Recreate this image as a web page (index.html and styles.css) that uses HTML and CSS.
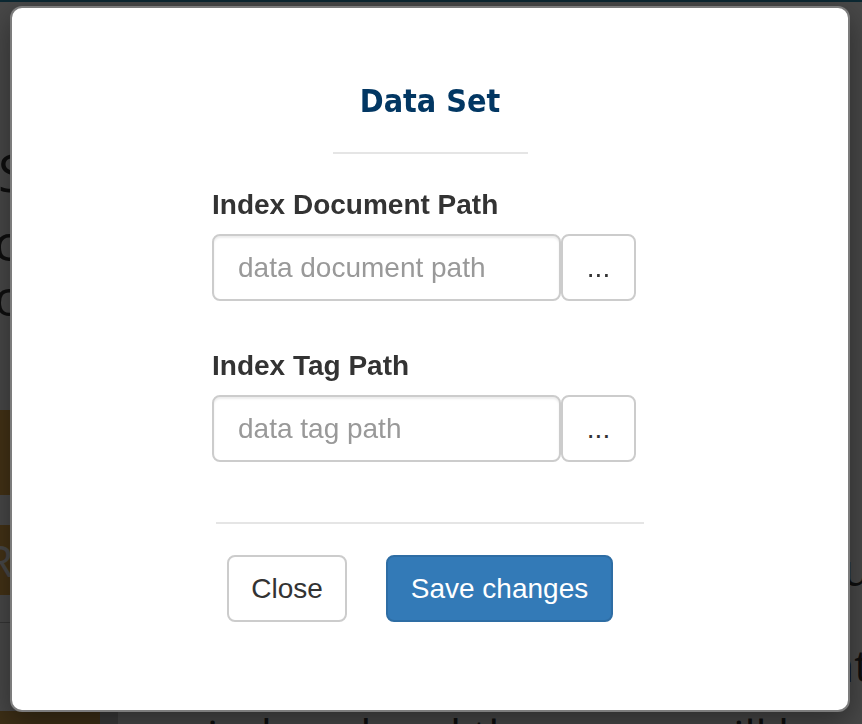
FILE: index.html
```html
<!DOCTYPE html>
<html lang="en">
<head>
<meta charset="utf-8">
<title>Data Set</title>
<link rel="stylesheet" href="styles.css">
</head>
<body>
<div class="page">
  <div class="topbar"></div>
  <div class="layout">
    <aside class="side">
      <h2 class="side-title">Search</h2>
      <p class="side-text">config</p>
      <p class="side-text">or</p>
      <div class="warn-block"></div>
      <div class="warn-btn">Reindex</div>
      <div class="side-rule"></div>
      <div class="warn-bottom"></div>
    </aside>
    <div class="gutter"></div>
    <main class="main">
      <p class="frag frag-u">you</p>
      <p class="frag frag-t">that</p>
      <p class="main-bottom">indexed and the screen will be</p>
    </main>
  </div>
</div>
<div class="backdrop"></div>
<div class="modal">
  <div class="modal-header">
    <h4 class="modal-title">Data Set</h4>
    <div class="head-rule"></div>
  </div>
  <form class="form">
    <div class="form-group">
      <label class="field-label">Index Document Path</label>
      <div class="input-group">
        <input class="form-control" type="text" placeholder="data document path">
        <button class="btn btn-default btn-browse" type="button">...</button>
      </div>
    </div>
    <div class="form-group second">
      <label class="field-label">Index Tag Path</label>
      <div class="input-group">
        <input class="form-control" type="text" placeholder="data tag path">
        <button class="btn btn-default btn-browse" type="button">...</button>
      </div>
    </div>
    <div class="foot-rule"></div>
    <div class="modal-footer">
      <button class="btn btn-default btn-close" type="button">Close</button>
      <button class="btn btn-primary" type="button">Save changes</button>
    </div>
  </form>
</div>
</body>
</html>
```
FILE: styles.css
```css
html, body {
  margin: 0;
  padding: 0;
  height: 724px;
  overflow: hidden;
}
body {
  background: #ffffff;
  font-family: "Liberation Sans", Arial, sans-serif;
  color: #333333;
}
.page {
  height: 724px;
  overflow: hidden;
}
.topbar {
  height: 2px;
  background: #2a8fb4;
}
.layout {
  display: grid;
  grid-template-columns: 100px 18px 1fr;
  height: 722px;
  overflow: hidden;
}
.side {
  font-family: "Open Sans", sans-serif;
  color: #333333;
  min-width: 0;
}
.side-title {
  margin: 140px 0 0 -2px;
  font-size: 52px;
  font-weight: 400;
  line-height: 60px;
}
.side-text {
  margin: 13px 0 0 -6px;
  font-size: 50px;
  line-height: 55px;
  white-space: nowrap;
}
.side-text + .side-text {
  margin-top: 0;
}
.warn-block {
  margin-top: 85px;
  height: 85px;
  background: #eeb04c;
}
.warn-btn {
  margin-top: 30px;
  height: 70px;
  background: #eeb04c;
  color: #ffffff;
  font-size: 44px;
  line-height: 70px;
  margin-left: -20px;
  padding-left: 6px;
  white-space: nowrap;
  overflow: hidden;
}
.side-rule {
  margin-top: 27px;
  height: 1px;
  background: #bbbbbb;
}
.warn-bottom {
  margin-top: 88px;
  height: 20px;
  background: #d8a64e;
}
.gutter {
  background: #cfcfcf;
  margin-top: 710px;
}
.main {
  font-family: "Open Sans", sans-serif;
  color: #333333;
  min-width: 0;
}
.frag {
  margin: 0 -8px 0 0;
  font-size: 44px;
  line-height: 50px;
  text-align: right;
}
.frag-u {
  margin-top: 542px;
}
.frag-t {
  margin-top: 46px;
}
.main-bottom {
  margin: 20px 0 0 89px;
  font-size: 44px;
  line-height: 50px;
  white-space: nowrap;
}

/* overlay */
.backdrop {
  position: fixed;
  inset: 0;
  background: rgba(0, 0, 0, 0.72);
}
.modal {
  position: fixed;
  left: 10px;
  top: 6px;
  width: 840px;
  height: 706px;
  box-sizing: border-box;
  background: #ffffff;
  border: 2px solid #7c7c7c;
  border-radius: 12px;
  box-shadow: 0 10px 30px rgba(0, 0, 0, 0.4);
}
.modal-header {
  padding-top: 73px;
  text-align: center;
}
.modal-title {
  margin: 0;
  font-family: "DejaVu Sans Condensed", "DejaVu Sans", sans-serif;
  font-stretch: condensed;
  font-weight: 700;
  font-size: 32px;
  line-height: 40px;
  color: #023763;
}
.head-rule {
  width: 195px;
  height: 2px;
  margin: 31px auto 0;
  background: #e5e5e5;
}
.form {
  width: 436px;
  margin: 31px auto 0;
}
.form-group.second {
  margin-top: 45px;
}
.field-label {
  display: block;
  font-weight: 700;
  font-size: 28px;
  line-height: 40px;
  color: #333333;
}
.input-group {
  display: flex;
  margin-top: 9px;
  height: 67px;
}
.form-control {
  box-sizing: border-box;
  width: 349px;
  height: 67px;
  margin: 0;
  padding: 0 24px;
  border: 2px solid #cccccc;
  border-radius: 8px;
  box-shadow: inset 0 2px 2px rgba(0, 0, 0, 0.075);
  font-family: "Liberation Sans", Arial, sans-serif;
  font-size: 28px;
  color: #555555;
  background: #ffffff;
  outline: none;
}
.form-control::placeholder {
  color: #999999;
}
.btn {
  box-sizing: border-box;
  height: 67px;
  margin: 0;
  padding: 0 24px;
  border: 2px solid #cccccc;
  border-radius: 8px;
  font-family: "Liberation Sans", Arial, sans-serif;
  font-size: 28px;
  line-height: 40px;
  cursor: pointer;
}
.btn-default {
  background: #ffffff;
  color: #333333;
}
.btn-browse {
  width: 75px;
  padding: 0;
}
.btn-primary {
  background: #337ab7;
  border-color: #2e6da4;
  color: #ffffff;
  width: 227px;
  padding: 0;
}
.btn-close {
  width: 120px;
  padding: 0;
}
.foot-rule {
  height: 2px;
  margin: 60px 4px 0 4px;
  background: #e5e5e5;
}
.modal-footer {
  display: flex;
  gap: 39px;
  margin-top: 31px;
  padding-left: 15px;
}
```
